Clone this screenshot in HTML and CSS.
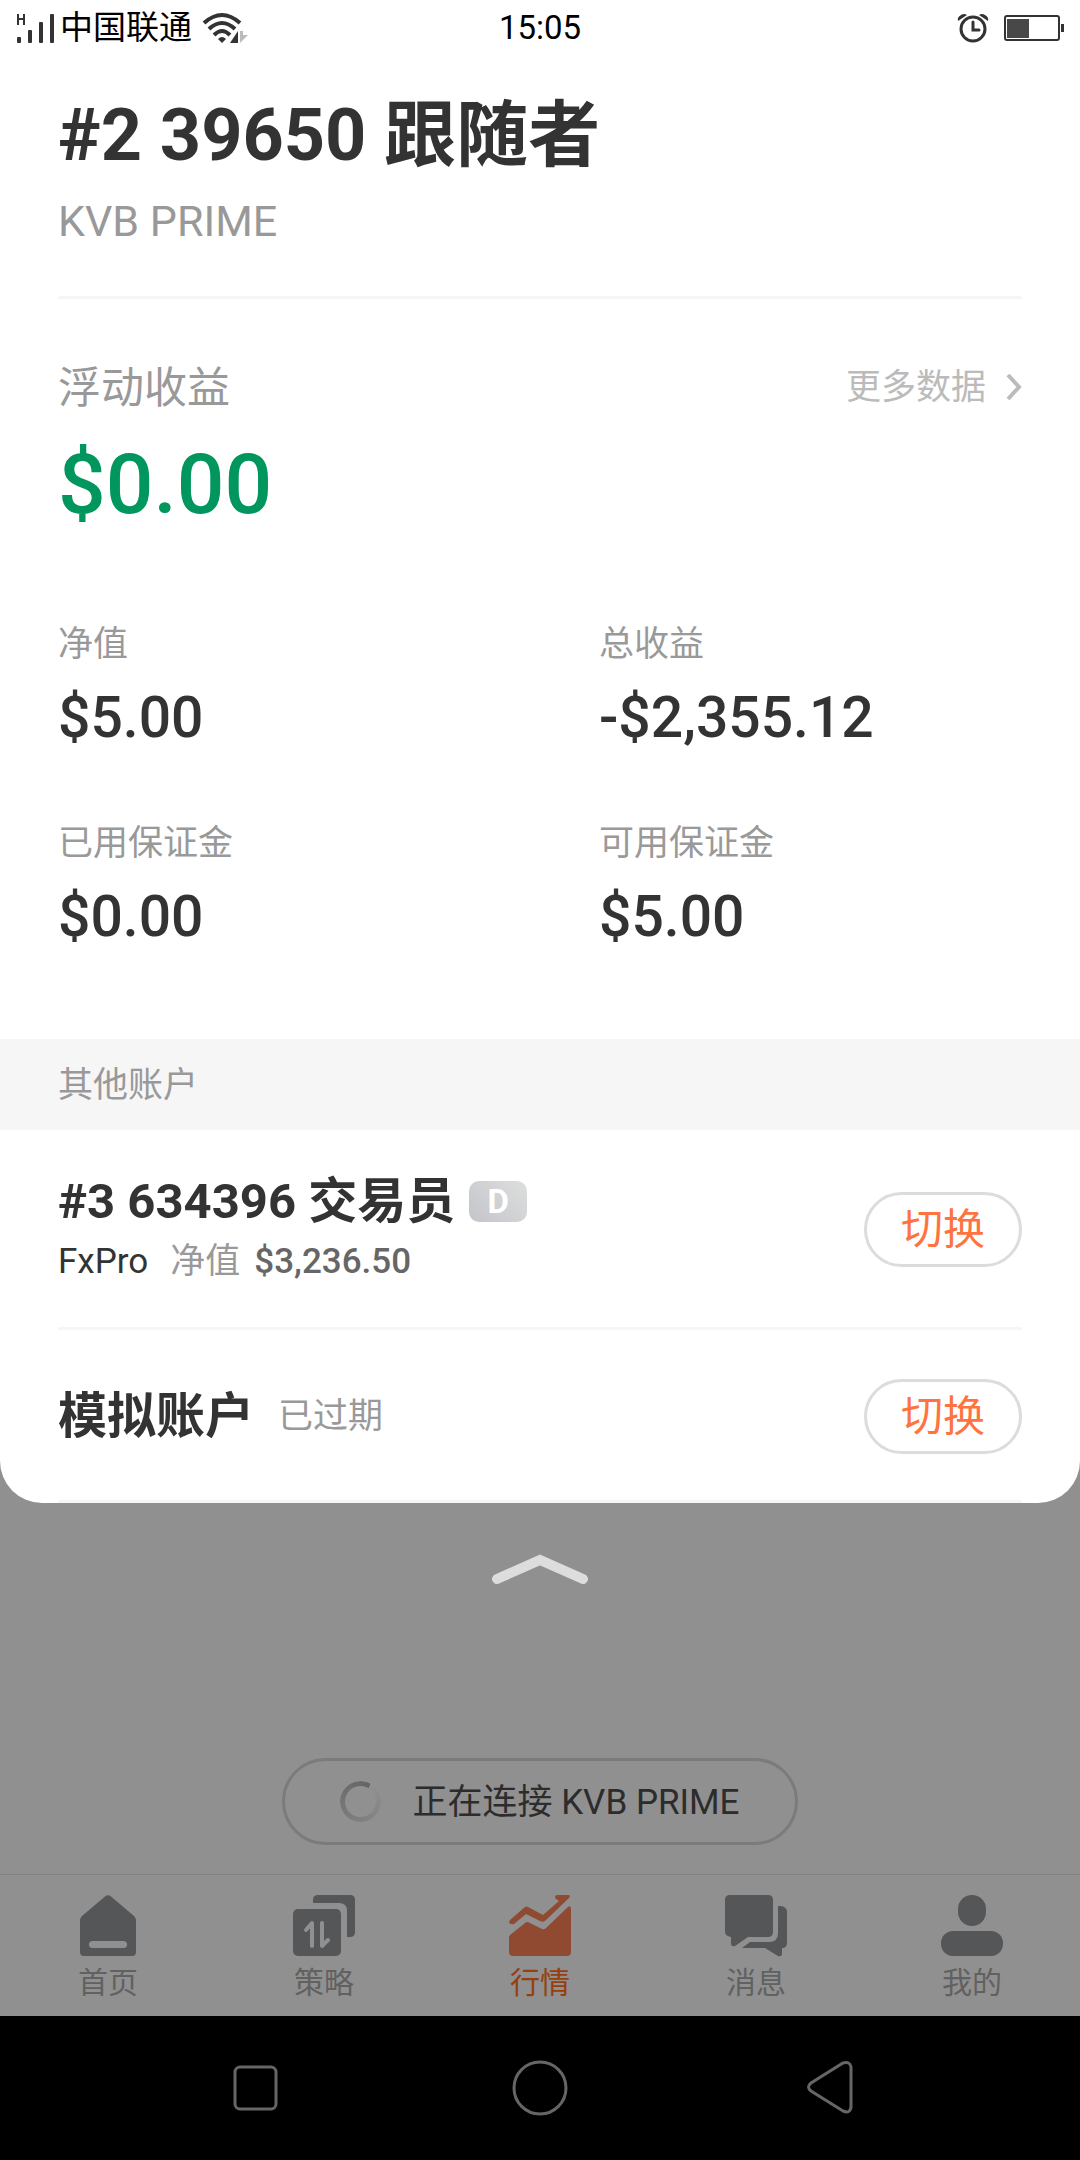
FILE: index.html
```html
<!DOCTYPE html>
<html lang="zh-CN">
<head>
<meta charset="utf-8">
<meta name="viewport" content="width=device-width, initial-scale=1">
<title>账户</title>
<link rel="stylesheet" href="styles.css">
</head>
<body>
<main class="sheet">
  <div class="status">
    <div class="status-side">
      <svg width="42" height="34" viewBox="0 0 42 34" fill="#333" aria-hidden="true">
        <path d="M1 3h2v4h4V3h2v11H7V9H3v5H1z"/>
        <rect x="1" y="26" width="4" height="6" rx="1"/><rect x="12" y="19" width="4" height="13" rx="1"/><rect x="23" y="11" width="4" height="21" rx="1"/><rect x="34" y="3" width="4" height="29" rx="1"/>
      </svg>
      <span>中国联通</span>
      <svg class="wifi" width="46" height="34" viewBox="0 0 46 34" aria-hidden="true">
        <g fill="none" stroke="#333" stroke-width="4"><path d="M2 12Q20-4 38 12"/><path d="M7 18Q20 6 33 18"/><path d="M12 24Q20 16 28 24"/></g>
        <path d="M16 28Q20 24 24 28L20 32z" fill="#333"/><path d="M28 32L36 20V32z" fill="#333"/><path d="M38 20V32L46 24H41V20z" fill="#bbb"/>
      </svg>
    </div>
    <time>15:05</time>
    <div class="status-side status-end">
      <svg width="32" height="32" viewBox="0 0 32 32" fill="none" stroke="#333" aria-hidden="true">
        <circle cx="16" cy="17" r="12" stroke-width="3"/><path d="M16 10v8h6" stroke-width="3" stroke-linecap="round"/>
        <path d="M1 9Q0 5 4 3Q7 1 10 3zM31 9Q32 5 28 3Q25 1 22 3z" fill="#333" stroke="none"/>
      </svg>
      <svg width="60" height="28" viewBox="0 0 60 28" aria-hidden="true">
        <rect x="1" y="2" width="54" height="24" rx="2" fill="none" stroke="#333" stroke-width="2"/><path d="M3 5h22v19H3z" fill="#484848"/><path d="M57 10h3v8h-3z" fill="#333"/>
      </svg>
    </div>
  </div>

  <header class="account">
    <h1>#2 39650 跟随者</h1>
    <p>KVB PRIME</p>
  </header>

  <section class="summary">
    <div class="summary-head">
      <h2>浮动收益</h2>
      <a class="more" href="#data">更多数据
        <svg width="16" height="28" viewBox="0 0 16 28" fill="none" stroke="#bbb" stroke-width="4" aria-hidden="true"><path d="M2 1l11 12L2 25"/></svg>
      </a>
    </div>
    <p class="profit">$0.00</p>
    <dl class="stats">
      <div><dt>净值</dt><dd>$5.00</dd></div>
      <div><dt>总收益</dt><dd>-$2,355.12</dd></div>
      <div><dt>已用保证金</dt><dd>$0.00</dd></div>
      <div><dt>可用保证金</dt><dd>$5.00</dd></div>
    </dl>
  </section>

  <h2 class="band">其他账户</h2>
  <ul class="others">
    <li class="row">
      <div class="info">
        <div class="name"><h3>#3 634396 交易员</h3><span class="badge">D</span></div>
        <p class="detail"><span class="broker">FxPro</span><span>净值</span><span class="equity">$3,236.50</span></p>
      </div>
      <button class="switch" type="button">切换</button>
    </li>
    <li class="row row-short">
      <div class="name name-wide"><h3>模拟账户</h3><span class="expired">已过期</span></div>
      <button class="switch" type="button">切换</button>
    </li>
  </ul>
</main>

<div class="backdrop">
  <button class="collapse" type="button" aria-label="收起">
    <svg width="96" height="30" viewBox="0 0 96 30" fill="none" stroke="#ddd" stroke-width="10" stroke-linecap="round" aria-hidden="true"><path d="M5 25L48 6L91 25"/></svg>
  </button>
  <div class="connecting" role="status"><span class="spinner"></span><span>正在连接 KVB PRIME</span></div>
</div>

<nav class="tabs">
  <a href="#home">
    <svg width="62" height="62" viewBox="0 0 62 62" fill="#545658" aria-hidden="true"><path fill-rule="evenodd" d="M28 1.500Q31 -1 34 1.500L57 21Q59 23 59 25V57Q59 61 55 61H7Q3 61 3 57V25Q3 23 5 21zM15.500 46a3.500 3.500 0 000 7h31a3.500 3.500 0 000-7z"/></svg>
    首页</a>
  <a href="#strategy">
    <svg width="62" height="62" viewBox="0 0 62 62" fill="#545658" aria-hidden="true"><path d="M20 8V5Q20 0 25 0H57Q62 0 62 5V37Q62 42 57 42H54V16Q54 8 46 8z"/><rect y="14" width="48" height="47" rx="5"/><g fill="none" stroke="#909090" stroke-width="4" stroke-linecap="round" stroke-linejoin="round"><path d="M13 35L19 28V51M29 28V51L35 45"/></g></svg>
    策略</a>
  <a class="active" href="#market" aria-current="page">
    <svg width="62" height="62" viewBox="0 0 62 62" fill="#8f4a31" aria-hidden="true"><path d="M1 25L16 12Q17 11 19 12L34 20L50 6L47 4Q44 0 49 0H59Q62 0 60 3L37 25Q34 28 31 26L17 19L5 29Q1 30 0 27z"/><path d="M1 40L16 28Q18 26 21 28L33 34Q35 35 37 33L59 12Q62 10 62 14V57Q62 61 58 61H4Q0 61 0 57V43Q0 41 1 40z"/></svg>
    行情</a>
  <a href="#messages">
    <svg width="62" height="62" viewBox="0 0 62 62" fill="#545658" aria-hidden="true"><path d="M5 0H43Q48 0 48 5V37Q48 42 43 42H23L10 51Q6 52 6 48V42Q0 41 0 37V5Q0 0 5 0z"/><path d="M53 11H56Q62 12 62 17V48Q62 53 57 53V59Q57 62 53 61L40 53H17L25 47H44Q53 47 53 38z"/></svg>
    消息</a>
  <a href="#me">
    <svg width="62" height="62" viewBox="0 0 62 62" fill="#545658" aria-hidden="true"><rect x="17" width="28" height="31" rx="14"/><rect y="36" width="62" height="25" rx="12"/></svg>
    我的</a>
</nav>

<div class="system">
  <button type="button" aria-label="最近任务"><svg width="56" height="56" viewBox="0 0 56 56" aria-hidden="true"><rect x="8" y="7" width="41" height="42" rx="5"/></svg></button>
  <button type="button" aria-label="主屏幕"><svg width="56" height="56" viewBox="0 0 56 56" aria-hidden="true"><circle cx="28" cy="28" r="26"/></svg></button>
  <button type="button" aria-label="返回"><svg width="56" height="56" viewBox="0 0 56 56" aria-hidden="true"><path d="M14 23L46 3Q53 1 54 7V47Q53 54 46 51L14 31Q9 27 14 23z"/></svg></button>
</div>
</body>
</html>
```
FILE: styles.css
```css
* { box-sizing: border-box; margin: 0; padding: 0; }

body {
  display: flex;
  flex-direction: column;
  min-height: 100vh;
  background: #909090;
  color: #333;
  font-family: Roboto, "Noto Sans CJK SC", sans-serif;
  font-size: 35px;
  line-height: 48px;
}

button { border: 0; background: none; font: inherit; cursor: pointer; }
a { color: inherit; text-decoration: none; }
ul { list-style: none; }
svg { display: block; flex: none; }

.sheet {
  overflow: hidden;
  border-radius: 0 0 42px 42px;
  background: #fff;
}

/* Status bar */
.status {
  display: grid;
  grid-template-columns: 1fr auto 1fr;
  align-items: center;
  height: 56px;
  padding: 0 16px;
  color: #000;
  font-size: 33px;
}
.status-side { display: flex; align-items: center; gap: 2px; }
.status-end { justify-content: flex-end; gap: 15px; }
.wifi { margin-left: 8px; }

/* Current account */
.account {
  margin: 0 58px;
  padding: 38px 0 47px;
  border-bottom: 3px solid #f6f6f6;
}
.account h1 { font-size: 72px; line-height: 84px; }
.account p { margin-top: 15px; color: #999; font-size: 43px; line-height: 56px; }

.summary { padding: 65px 58px 90px; }
.summary-head { display: flex; align-items: center; justify-content: space-between; }
.summary-head h2 { color: #999; font-size: 43px; font-weight: 400; }
.more { display: flex; align-items: center; gap: 20px; color: #bbb; }
.profit {
  margin-top: 25px;
  color: #00965e;
  font-size: 84px;
  font-weight: 500;
  line-height: 96px;
}
.stats {
  display: grid;
  grid-template-columns: 1fr 1fr;
  gap: 70px 118px;
  margin-top: 88px;
}
.stats dt { color: #999; }
.stats dd { margin-top: 17px; font-size: 57px; font-weight: 500; line-height: 64px; }

/* Other accounts */
.band {
  padding: 23px 58px 20px;
  background: #f6f6f6;
  color: #999;
  font-size: 35px;
  font-weight: 400;
}
.others { padding: 0 58px; }
.row {
  display: flex;
  align-items: center;
  justify-content: space-between;
  min-height: 200px;
  padding-top: 2px;
  border-bottom: 3px solid #f6f6f6;
}
.row-short { min-height: 173px; }
.name { display: flex; align-items: center; gap: 14px; }
.name-wide { gap: 24px; padding-top: 2px; }
.name h3 { font-size: 49px; line-height: 56px; }
.badge {
  width: 58px;
  border-radius: 10px;
  background: linear-gradient(45deg, #c3c5ca, #dedede);
  color: #fff;
  font-size: 33px;
  font-weight: 700;
  line-height: 41px;
  text-align: center;
}
.detail { display: flex; gap: 14px; margin-top: 8px; color: #999; }
.broker { margin-right: 8px; color: #333; }
.equity { color: #666; font-weight: 500; }
.expired { color: #999; }
.switch {
  height: 75px;
  padding: 1px 34px 0;
  border: 3px solid #dcdcdc;
  border-radius: 38px;
  color: #ff7340;
  font-size: 42px;
}

/* Dimmed page under the sheet */
.backdrop {
  display: flex;
  flex: 1;
  flex-direction: column;
  align-items: center;
  justify-content: space-between;
  gap: 48px;
  padding: 51px 0 29px;
}
.connecting {
  display: flex;
  align-items: center;
  gap: 31px;
  height: 87px;
  padding: 0 55px;
  border: 3px solid #7b7b7b;
  border-radius: 44px;
  color: #2c2c2c;
}
.connecting span:last-child { padding-top: 2px; }
.spinner {
  width: 41px;
  height: 41px;
  border-radius: 50%;
  background: conic-gradient(from 30deg, #909090, #7c7c7c 50%, #646464);
  mask: radial-gradient(circle, transparent 15px, #000 16px);
}

.tabs {
  display: grid;
  grid-template-columns: repeat(5, 1fr);
  height: 142px;
  padding-top: 20px;
  border-top: 1px solid #828282;
  color: #616161;
  font-size: 30px;
  line-height: 44px;
}
.tabs a { display: flex; flex-direction: column; align-items: center; gap: 4px; }
.tabs .active { color: #94410f; }

.system {
  display: grid;
  grid-template-columns: repeat(3, 1fr);
  align-items: center;
  height: 144px;
  padding: 0 112px;
  background: #000;
}
.system button { display: flex; justify-content: center; }
.system svg { fill: none; stroke: #666; stroke-width: 3; }
```
